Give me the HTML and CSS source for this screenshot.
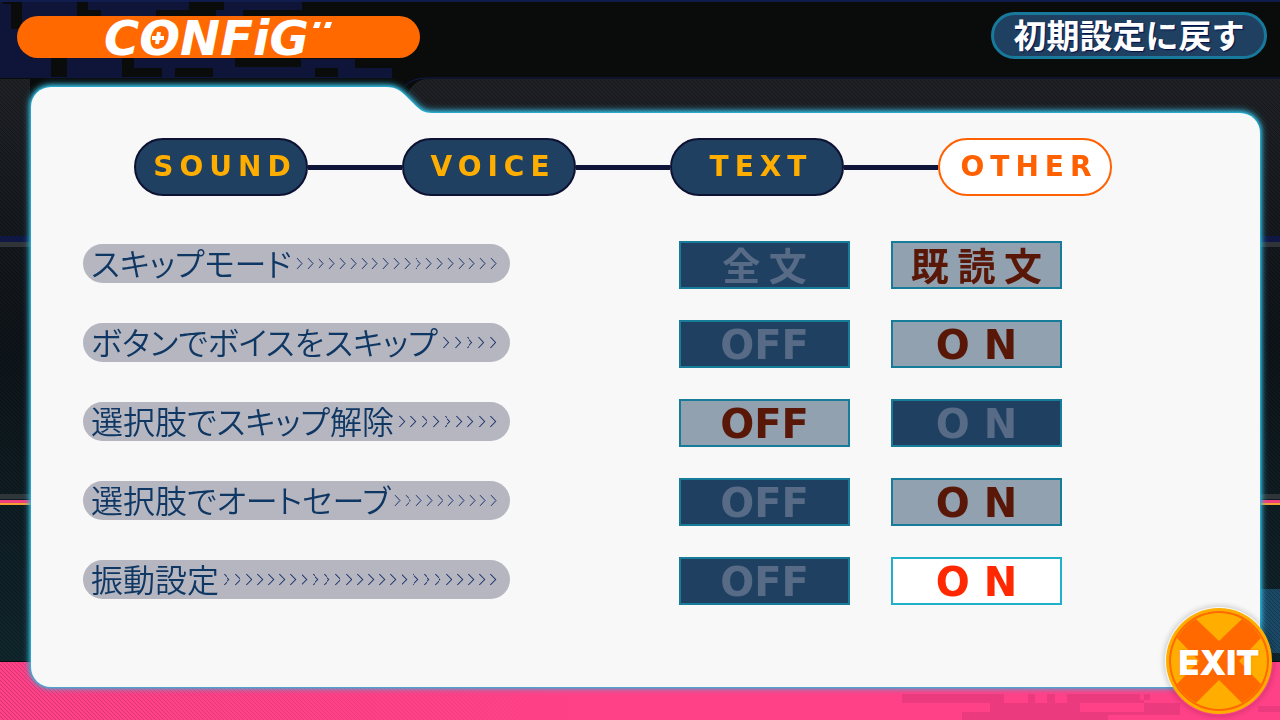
FILE: index.html
```html
<!DOCTYPE html>
<html lang="ja">
<head>
    <meta charset="UTF-8">
    <meta name="viewport" content="width=device-width, initial-scale=1.0">
    <title>CONFiG</title>
    <link rel="stylesheet" href="styles.css">
</head>
<body>
    <!-- Backdrop: dark bands, pixel camouflage and the pink floor -->
    <svg class="backdrop" viewBox="0 0 1280 720" preserveAspectRatio="none" aria-hidden="true">
        <defs>
            <linearGradient id="night" x1="0" y1="0" x2="0" y2="1">
                <stop offset="0" stop-color="#1f2125"/>
                <stop offset="0.45" stop-color="#0e1419"/>
                <stop offset="1" stop-color="#10262d"/>
            </linearGradient>
            <linearGradient id="floor-fade">
                <stop offset="0" stop-color="#ff4188" stop-opacity="0"/>
                <stop offset="1" stop-color="#ff4188"/>
            </linearGradient>
            <pattern id="hatch" width="4" height="4" patternUnits="userSpaceOnUse">
                <path d="M0 0L4 4" stroke="#000" stroke-opacity="0.25" stroke-width="1"/>
            </pattern>
        </defs>
        <rect width="1280" height="720" fill="#0a0c0b"/>
        <rect width="1280" height="2" fill="#101c4c"/>
        <path fill="#0e1539" d="M0 2H302V59H392V78H0Z"/>
        <path fill="#0a0c0b" d="M3 2H22V29H11V4H3ZM77 2H88V10H101V16H77ZM189 2H224V10H216V16H156V10H189ZM243 10H303V16H243ZM51 58H67V77H51ZM122 58H134V68H162V77H122ZM175 68H213V77H175ZM235 58H301V67H235ZM315 68H338V77H315ZM355 58H392V68H355Z"/>
        <path fill="url(#night)" d="M0 79H30V100H405Q412 79 428 79H1280V661H0Z"/>
        <rect y="79" width="1280" height="582" fill="url(#hatch)"/>
        <path fill="none" stroke="#101c4c" stroke-width="1" d="M405 86Q412 78 428 78H1280"/>
        <rect y="236" width="1280" height="6" fill="#0f1845"/>
        <rect y="242" width="1280" height="5" fill="#303438"/>
        <rect y="494" width="1280" height="5" fill="#2e3639"/>
        <rect y="500" width="1280" height="3" fill="#f0407e"/>
        <rect y="503" width="1280" height="2" fill="#f5a030"/>
        <rect x="1250" y="589" width="30" height="64" fill="#1b4a68"/>
        <rect x="1250" y="589" width="30" height="64" fill="url(#hatch)"/>
        <rect y="662" width="1280" height="58" fill="#ff4188"/>
        <path fill="#ec3a7e" d="M902 694H1004V703H1016V712H1028V703H1061V712H1080V703H1144V694H1067V703H1055V694H1047V703H1035V694H1028V703H990V712H962V720H1108V715H1180V703H1144V712H1061V703H902ZM1180 668H1200V675H1180ZM1140 694H1150V700H1140ZM1258 706H1280V712H1258Z"/>
        <rect y="662" width="600" height="58" fill="url(#hatch)" opacity="0.7"/>
        <rect y="662" width="600" height="58" fill="url(#floor-fade)"/>
    </svg>

    <header class="top-bar">
        <h1 class="title">
            <span>C<span class="title-o">O<svg class="title-plus" viewBox="0 0 14 14" aria-hidden="true"><path d="M8 1L6 13M1 7H13"/></svg></span>NFiG</span>
            <svg class="title-ticks" viewBox="0 0 20 6" aria-hidden="true"><path d="M2 0H8L6 6H0ZM13 0H19L17 6H11Z"/></svg>
        </h1>
        <button type="button" class="reset-button">初期設定に戻す</button>
    </header>

    <main class="panel">
        <!-- raised folder edge on the left -->
        <div class="panel-edge">
            <div class="panel-ear"></div>
            <svg class="panel-slope" viewBox="0 0 46 26" aria-hidden="true"><path d="M0 0C11 0 16 5 20 9L29 18C34 23 38 26 46 26H0Z"/></svg>
        </div>

        <div class="panel-body">
            <nav class="tabs">
                <button type="button" class="tab">SOUND</button>
                <span class="tab-line"></span>
                <button type="button" class="tab">VOICE</button>
                <span class="tab-line"></span>
                <button type="button" class="tab">TEXT</button>
                <span class="tab-line"></span>
                <button type="button" class="tab tab-current" aria-current="page">OTHER</button>
            </nav>

            <form class="settings">
                <div class="setting" role="radiogroup" aria-labelledby="skip-mode">
                    <div class="setting-name"><span id="skip-mode">スキップモード</span><span class="arrows"></span></div>
                    <label class="option option-kanji"><input type="radio" name="skip-mode"><span>全 文</span></label>
                    <label class="option option-kanji"><input type="radio" name="skip-mode" checked><span>既 読 文</span></label>
                </div>
                <div class="setting" role="radiogroup" aria-labelledby="voice-skip">
                    <div class="setting-name"><span id="voice-skip">ボタンでボイスをスキップ</span><span class="arrows"></span></div>
                    <label class="option"><input type="radio" name="voice-skip"><span>OFF</span></label>
                    <label class="option"><input type="radio" name="voice-skip" checked><span>O N</span></label>
                </div>
                <div class="setting" role="radiogroup" aria-labelledby="choice-skip">
                    <div class="setting-name"><span id="choice-skip">選択肢でスキップ解除</span><span class="arrows"></span></div>
                    <label class="option"><input type="radio" name="choice-skip" checked><span>OFF</span></label>
                    <label class="option"><input type="radio" name="choice-skip"><span>O N</span></label>
                </div>
                <div class="setting" role="radiogroup" aria-labelledby="choice-save">
                    <div class="setting-name"><span id="choice-save">選択肢でオートセーブ</span><span class="arrows"></span></div>
                    <label class="option"><input type="radio" name="choice-save"><span>OFF</span></label>
                    <label class="option"><input type="radio" name="choice-save" checked><span>O N</span></label>
                </div>
                <div class="setting setting-active" role="radiogroup" aria-labelledby="vibration">
                    <div class="setting-name"><span id="vibration">振動設定</span><span class="arrows"></span></div>
                    <label class="option"><input type="radio" name="vibration"><span>OFF</span></label>
                    <label class="option"><input type="radio" name="vibration" checked><span>O N</span></label>
                </div>
            </form>
        </div>
    </main>

    <button type="button" class="exit-button">
        <svg viewBox="0 0 108 108" aria-hidden="true">
            <circle cx="54" cy="54" r="53" fill="#ffae00"/>
            <circle cx="54" cy="54" r="50" fill="#ff6900"/>
            <circle cx="54" cy="54" r="48" fill="#ffae00"/>
            <path fill="#ff6900" d="M31 12L54 34L77 12A48 48 0 0 1 96 31L74 54L96 77A48 48 0 0 1 77 96L54 73L31 96A48 48 0 0 1 12 77L34 54L12 31A48 48 0 0 1 31 12Z"/>
        </svg>
        <span>EXIT</span>
    </button>
</body>
</html>
```
FILE: styles.css
```css
* {
    box-sizing: border-box;
}

body {
    margin: 0;
    min-height: 100vh;
    display: flex;
    flex-direction: column;
    position: relative;
    background-color: #0a0c0b;
    font-family: "Noto Sans CJK JP", sans-serif;
}

button {
    margin: 0;
    padding: 0;
    cursor: pointer;
}

.backdrop {
    position: absolute;
    inset: 0;
    width: 100%;
    height: 100%;
    z-index: -1;
}

/* top bar */
.top-bar {
    display: flex;
    justify-content: space-between;
    align-items: flex-start;
    height: 87px;
    padding: 12px 13px 0 17px;
}

.title {
    display: flex;
    justify-content: center;
    gap: 4px;
    width: 403px;
    height: 42px;
    margin: 4px 0 0;
    border-radius: 21px;
    background-color: #ff6900;
    color: #fff;
    font: italic bold 48px/44px "DejaVu Sans", sans-serif;
}

.title-o {
    position: relative;
}

.title-plus {
    position: absolute;
    left: 12px;
    top: 21px;
    width: 14px;
    height: 14px;
    fill: none;
    stroke: #fff;
    stroke-width: 4;
}

.title-ticks {
    width: 20px;
    height: 6px;
    margin-top: 6px;
    fill: #fff;
}

.reset-button {
    width: 276px;
    height: 47px;
    border: 3px solid #17799b;
    border-radius: 24px;
    background-color: #1f4061;
    color: #fff;
    font: bold 33px/38px "Noto Sans CJK JP", sans-serif;
    padding-bottom: 3px;
    text-shadow: 1px 1px 1px #05104a;
}

/* panel */
.panel {
    flex: 1;
    display: flex;
    flex-direction: column;
    margin: 0 20px 33px 31px;
    filter: drop-shadow(0 0 1px #1fc0e6) drop-shadow(0 0 2px #35b4d8) drop-shadow(0 -1px 3px #35b4d8);
}

.panel-edge {
    display: flex;
    height: 26px;
}

.panel-ear {
    width: 355px;
    border-radius: 20px 0 0 0;
    background-color: #f8f8f8;
}

.panel-slope {
    width: 46px;
    height: 26px;
    fill: #f8f8f8;
}

.panel-body {
    flex: 1;
    padding: 25px 0 78px;
    border-radius: 0 20px 20px 20px;
    background-color: #f8f8f8;
}

/* tabs */
.tabs {
    display: flex;
    align-items: center;
    margin: 0 148px 45px 103px;
}

.tab {
    width: 174px;
    height: 58px;
    padding-left: 8px;
    border: 2px solid #0d1233;
    border-radius: 29px;
    background-color: #1f4061;
    color: #ffae00;
    font: bold 28px/54px "DejaVu Sans", sans-serif;
    letter-spacing: 6px;
}

.tab-current {
    border-color: #ff6000;
    background-color: #fff;
    color: #ff6000;
}

.tab-line {
    flex: 1;
    height: 5px;
    background-color: #10153a;
}

/* settings */
.settings {
    display: flex;
    flex-direction: column;
    gap: 31px;
    margin: 0 198px 0 52px;
}

.setting {
    display: flex;
    align-items: flex-start;
    gap: 41px;
}

.setting-name {
    display: flex;
    align-items: center;
    gap: 2px;
    width: 427px;
    height: 39px;
    margin: 3px auto 0 0;
    padding: 0 11px 0 8px;
    border-radius: 20px;
    background-color: #b6b6c1;
    color: #0f3763;
    font-size: 32px;
    font-weight: 350;
    line-height: 36px;
    font-feature-settings: "palt";
    white-space: nowrap;
}

.setting-name span:first-child {
    height: 39px;
}

.arrows {
    flex: 1;
    height: 13px;
    background-image: url("data:image/svg+xml,%3Csvg xmlns='http://www.w3.org/2000/svg' width='11' height='13' viewBox='0 0 11 13'%3E%3Cpath d='M3 1L8 6.500L3 12' fill='none' stroke='%2318306a'/%3E%3C/svg%3E");
    background-size: 11px 13px;
    background-repeat: round no-repeat;
}

.option {
    position: relative;
    width: 171px;
    height: 48px;
    cursor: pointer;
}

.option input {
    position: absolute;
    inset: 0;
    width: 100%;
    height: 100%;
    margin: 0;
    opacity: 0;
}

.option span {
    display: block;
    height: 48px;
    border: 2px solid #177c99;
    background-color: #1f4061;
    color: #576b87;
    font: bold 40px/46px "DejaVu Sans", sans-serif;
    text-align: center;
}

.option-kanji span {
    font: bold 38px/41px "Noto Sans CJK JP", sans-serif;
}

.option input:checked + span {
    background-color: #91a1b0;
    color: #591807;
}

.setting-active .option input:checked + span {
    border-color: #20b0cb;
    background-color: #fff;
    color: #ff2800;
}

/* exit */
.exit-button {
    position: absolute;
    right: 7px;
    bottom: 5px;
    display: grid;
    place-items: center;
    width: 108px;
    height: 108px;
    border: none;
    border-radius: 50%;
    background: none;
    box-shadow: 0 0 5px 2px rgba(0, 0, 0, 0.15);
    color: #fff;
    font: 900 34px/40px Inter, sans-serif;
    text-shadow: 0 0 2px #ff6900;
}

.exit-button svg,
.exit-button span {
    grid-area: 1 / 1;
}

.exit-button span {
    padding-top: 4px;
}

.exit-button svg {
    width: 108px;
    height: 108px;
}
```
